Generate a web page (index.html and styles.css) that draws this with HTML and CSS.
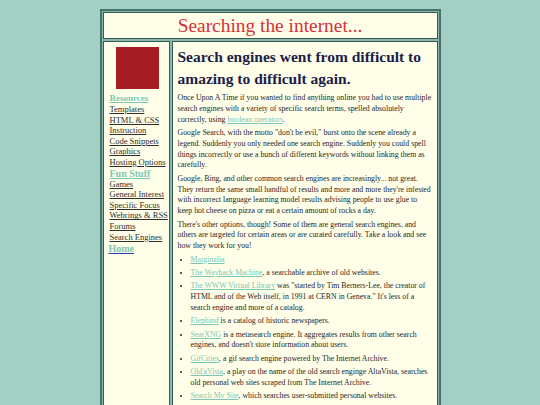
FILE: index.html
```html
<!DOCTYPE html>
<html>
<head>
<meta charset="utf-8">
<title>Searching the internet...</title>
<link rel="stylesheet" href="styles.css">
</head>
<body>
<div class="page">
  <header class="cell top">
    <h1 class="site-title">Searching the internet...</h1>
  </header>
  <div class="row">
    <nav class="cell side">
      <div class="logo"></div>
      <a class="cat" href="#">Resources</a>
      <a class="sub" href="#">Templates</a>
      <a class="sub" href="#">HTML &amp; CSS Instruction</a>
      <a class="sub" href="#">Code Snippets</a>
      <a class="sub" href="#">Graphics</a>
      <a class="sub" href="#">Hosting Options</a>
      <a class="cat big" href="#">Fun Stuff</a>
      <a class="sub" href="#">Games</a>
      <a class="sub" href="#">General Interest</a>
      <a class="sub" href="#">Specific Focus</a>
      <a class="sub" href="#">Webrings &amp; RSS</a>
      <a class="sub" href="#">Forums</a>
      <a class="sub" href="#">Search Engines</a>
      <a class="home" href="#">Home</a>
    </nav>
    <main class="cell main">
      <h2 class="headline">Search engines went from difficult to amazing to difficult again.</h2>
      <p>Once Upon A Time if you wanted to find anything online you had to use multiple search engines with a variety of specific search terms, spelled absolutely correctly, using <a href="#">boolean operators</a>.</p>
      <p>Google Search, with the motto "don't be evil," burst onto the scene already a legend. Suddenly you only needed one search engine. Suddenly you could spell things incorrectly or use a bunch of different keywords without linking them as carefully.</p>
      <p>Google, Bing, and other common search engines are increasingly... not great. They return the same small handful of results and more and more they're infested with incorrect language learning model results advising people to use glue to keep hot cheese on pizza or eat a certain amount of rocks a day.</p>
      <p>There's other options, though! Some of them are general search engines, and others are targeted for certain areas or are curated carefully. Take a look and see how they work for you!</p>
      <ul>
        <li><a href="#">Marginalia</a></li>
        <li><a href="#">The Wayback Machine</a>, a searchable archive of old websites.</li>
        <li><a href="#">The WWW Virtual Library</a> was "started by Tim Berners-Lee, the creator of HTML and of the Web itself, in 1991 at CERN in Geneva." It's less of a search engine and more of a catalog.</li>
        <li><a href="#">Elephind</a> is a catalog of historic newspapers.</li>
        <li><a href="#">SearXNG</a> is a metasearch engine. It aggregates results from other search engines, and doesn't store information about users.</li>
        <li><a href="#">GifCities</a>, a gif search engine powered by The Internet Archive.</li>
        <li><a href="#">Old'aVista</a>, a play on the name of the old search enginge AltaVista, searches old personal web sites scraped from The Internet Archive.</li>
        <li><a href="#">Search My Site</a>, which searches user-submitted personal websites.</li>
      </ul>
    </main>
  </div>
</div>
</body>
</html>
```
FILE: styles.css
```css
html, body {
  margin: 0;
  padding: 0;
  background: #a3cfc5;
}
body {
  font-family: "Liberation Serif", "Times New Roman", serif;
  color: #262626;
  overflow: hidden;
  height: 405px;
}
.page {
  width: 335px;
  margin: 9px auto 0 auto;
  border: 2px solid #44736a;
  background: #8db7ac;
  padding: 1px;
  display: flex;
  flex-direction: column;
  gap: 2px;
}
.cell {
  background: #fffee9;
  border: 1px solid #335e54;
}
.top {
  height: 25px;
  display: flex;
  align-items: center;
  justify-content: center;
}
.site-title {
  margin: 0;
  font-weight: normal;
  font-size: 19.4px;
  color: #d8303a;
}
.row {
  display: flex;
  gap: 2px;
  align-items: stretch;
}
.side {
  width: 67px;
  flex: none;
  display: flex;
  flex-direction: column;
  align-items: flex-start;
  padding: 5px 0 0 5px;
  box-sizing: border-box;
  min-height: 380px;
}
.logo {
  width: 43px;
  height: 42px;
  background: #a51c24;
  margin: 0 0 4px 7px;
}
.side a {
  text-decoration: underline;
}
.cat {
  color: #7cc6b3;
  font-size: 9px;
  font-weight: bold;
  margin: 0 0 0 1px;
  line-height: 11px;
}
.cat.big {
  font-size: 10px;
}
.sub {
  color: #2e2e2e;
  font-size: 8.5px;
  line-height: 10.6px;
  margin-left: 1px;
  width: 60px;
}
.home {
  color: #7cc6b3;
  font-weight: bold;
  font-size: 10px;
  line-height: 12px;
  margin-top: 1px;
  text-decoration-color: #2838c0 !important;
}
.main {
  flex: 1;
  padding: 4px 3px 10px 5px;
  font-size: 7.8px;
  line-height: 10.8px;
}
.headline {
  margin: 0 0 3px 0;
  font-size: 15.5px;
  line-height: 22px;
  color: #1a1f4a;
  font-weight: bold;
}
.main p {
  margin: 0 0 2.6px 0;
}
.main a {
  color: #7cc6b3;
}
.main ul {
  margin: 2px 0 0 0;
  padding-left: 13px;
}
.main li {
  margin-bottom: 2.6px;
}
```
